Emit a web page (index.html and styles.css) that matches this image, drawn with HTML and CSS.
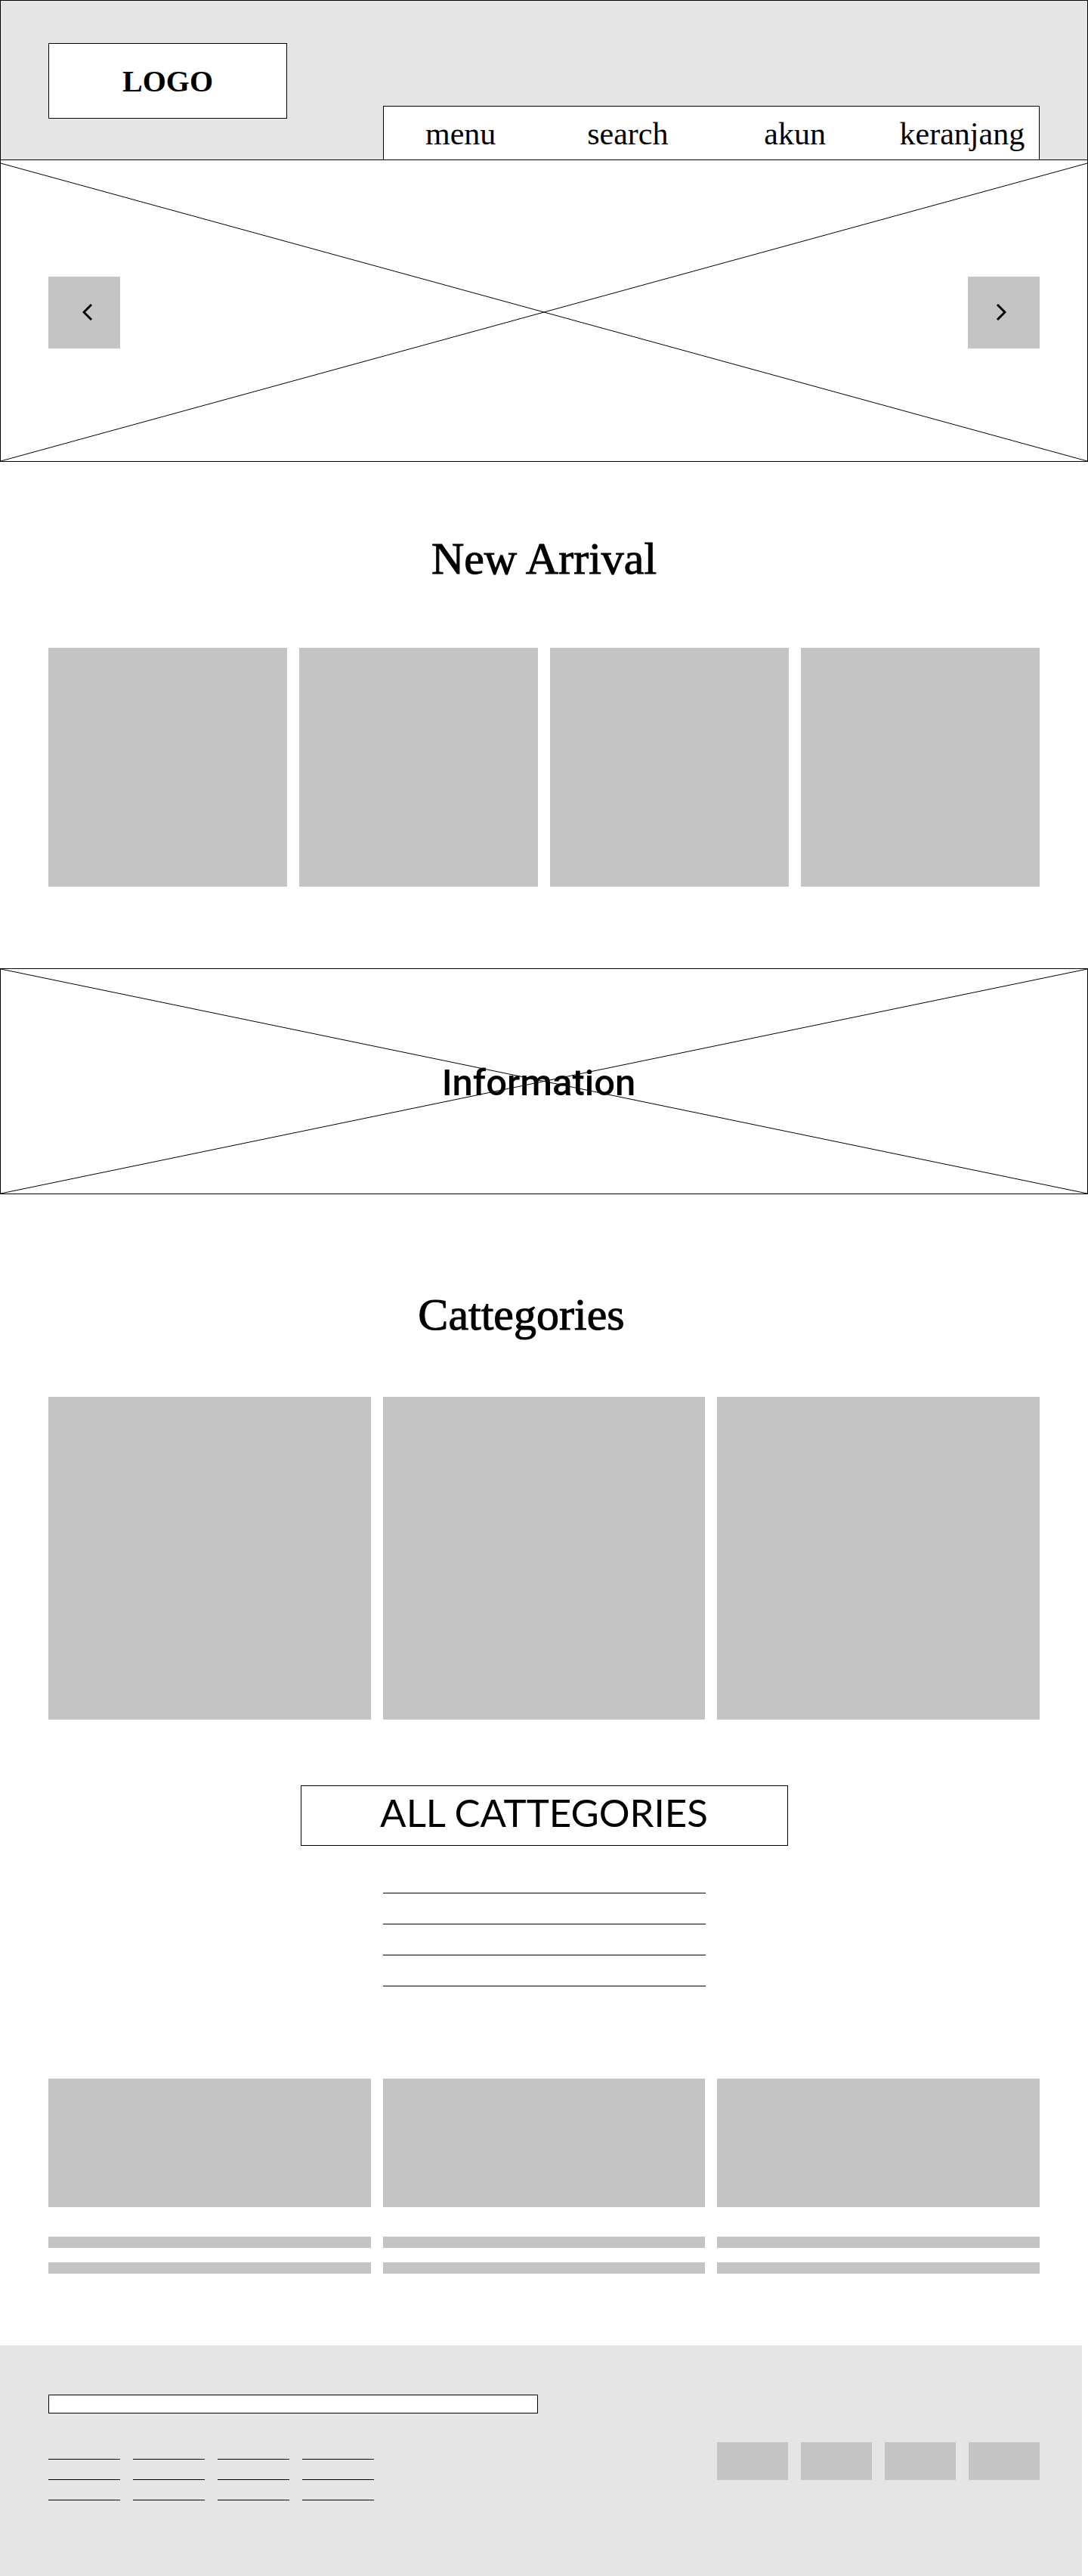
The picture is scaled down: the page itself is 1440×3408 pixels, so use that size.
FILE: index.html
```html
<!DOCTYPE html>
<html lang="id">
<head>
<meta charset="utf-8">
<meta name="viewport" content="width=device-width, initial-scale=1">
<title>LOGO</title>
<link rel="stylesheet" href="styles.css">
</head>
<body>
<header class="header">
  <a class="logo" href="#">LOGO</a>
  <nav class="nav">
    <ul class="nav-list">
      <li><a href="#">menu</a></li>
      <li><a href="#">search</a></li>
      <li><a href="#">akun</a></li>
      <li><a href="#">keranjang</a></li>
    </ul>
  </nav>
</header>

<main>
  <section class="hero" aria-label="Slider">
    <svg class="cross" aria-hidden="true"><line x1="0" y1="4" x2="100%" y2="100%"/><line x1="0" y1="100%" x2="100%" y2="4"/></svg>
    <button class="arrow arrow-prev" type="button" aria-label="Previous">
      <svg width="14" height="24" viewBox="0 0 14 24" aria-hidden="true"><path d="M12 2 2 12l10 10"/></svg>
    </button>
    <button class="arrow arrow-next" type="button" aria-label="Next">
      <svg width="14" height="24" viewBox="0 0 14 24" aria-hidden="true"><path d="m2 2 10 10L2 22"/></svg>
    </button>
  </section>

  <section class="arrivals">
    <h2 class="title">New Arrival</h2>
    <div class="grid grid-four">
      <div class="tile"></div>
      <div class="tile"></div>
      <div class="tile"></div>
      <div class="tile"></div>
    </div>
  </section>

  <section class="banner">
    <svg class="cross" aria-hidden="true"><line x1="0" y1="0" x2="100%" y2="100%"/><line x1="0" y1="100%" x2="100%" y2="0"/></svg>
    <h2 class="banner-title">Information</h2>
  </section>

  <section class="categories">
    <h2 class="title title-shifted">Cattegories</h2>
    <div class="grid grid-three">
      <div class="tile"></div>
      <div class="tile"></div>
      <div class="tile"></div>
    </div>
    <a class="all-link" href="#">ALL CATTEGORIES</a>
    <ul class="category-lines">
      <li></li>
      <li></li>
      <li></li>
      <li></li>
    </ul>
  </section>

  <section class="grid grid-three posts">
    <article class="post"><div class="post-image"></div><div class="bar"></div><div class="bar"></div></article>
    <article class="post"><div class="post-image"></div><div class="bar"></div><div class="bar"></div></article>
    <article class="post"><div class="post-image"></div><div class="bar"></div><div class="bar"></div></article>
  </section>
</main>

<footer class="footer">
  <input class="subscribe" type="text" aria-label="Email">
  <div class="footer-row">
    <div class="footer-links">
      <ul><li></li><li></li><li></li></ul>
      <ul><li></li><li></li><li></li></ul>
      <ul><li></li><li></li><li></li></ul>
      <ul><li></li><li></li><li></li></ul>
    </div>
    <div class="badges">
      <div class="badge"></div>
      <div class="badge"></div>
      <div class="badge"></div>
      <div class="badge"></div>
    </div>
  </div>
</footer>
</body>
</html>
```
FILE: styles.css
```css
*,
*::before,
*::after {
  box-sizing: border-box;
}

body {
  margin: 0;
  background: #fff;
  color: #000;
  font-family: "Liberation Serif", serif;
}

a {
  color: inherit;
  text-decoration: none;
}

ul {
  margin: 0;
  padding: 0;
  list-style: none;
}

.header {
  display: flex;
  justify-content: space-between;
  align-items: flex-start;
  padding: 56px 63px 0;
  background: #e5e5e5;
  border: 1px solid #000;
}

.logo {
  display: flex;
  align-items: center;
  justify-content: center;
  width: 316px;
  height: 100px;
  background: #fff;
  border: 1px solid #000;
  font-size: 40px;
  font-weight: 700;
}

.nav {
  width: 869px;
  margin-top: 83px;
  padding-top: 2px;
  background: #fff;
  border: 1px solid #000;
  border-bottom: 0;
}

.nav-list {
  display: grid;
  grid-template-columns: repeat(4, 1fr);
  margin: 0 -9px;
  font-size: 42px;
  line-height: 68px;
  text-align: center;
}

.hero {
  position: relative;
  display: flex;
  align-items: center;
  justify-content: space-between;
  height: 399px;
  padding: 4px 63px 0;
  border: 1px solid #000;
  border-top: 0;
}

.cross {
  position: absolute;
  inset: 0;
  width: 100%;
  height: 100%;
  stroke: #000;
  stroke-width: 1;
}

.arrow {
  position: relative;
  display: flex;
  align-items: center;
  justify-content: center;
  width: 95px;
  height: 95px;
  padding: 0;
  background: #c4c4c4;
  border: 0;
}

.arrow-prev {
  padding-left: 8px;
}

.arrow-next {
  padding-right: 8px;
}

.arrow path {
  fill: none;
  stroke: #000;
  stroke-width: 3;
}

.title {
  margin: 0;
  font-size: 60px;
  font-weight: 400;
  line-height: 70px;
  text-align: center;
  -webkit-text-stroke: 1px #000;
}

.title-shifted {
  padding-right: 60px;
}

.grid {
  display: grid;
  gap: 16px;
}

.grid-four {
  grid-template-columns: repeat(4, 1fr);
}

.grid-three {
  grid-template-columns: repeat(3, 1fr);
}

.tile {
  aspect-ratio: 1;
  background: #c4c4c4;
}

.arrivals {
  padding: 93px 64px 108px;
}

.arrivals .title {
  margin-bottom: 83px;
}

.banner {
  position: relative;
  display: flex;
  align-items: center;
  justify-content: center;
  height: 299px;
  padding: 4px 14px 0 0;
  border: 1px solid #000;
}

.banner-title {
  position: relative;
  margin: 0;
  font-family: Roboto, sans-serif;
  font-size: 49px;
  font-weight: 500;
}

.categories {
  display: flex;
  flex-direction: column;
  padding: 124px 64px 122px;
}

.categories .title {
  margin-bottom: 74px;
}

.all-link {
  display: flex;
  align-items: center;
  justify-content: center;
  align-self: center;
  width: 645px;
  height: 80px;
  margin-top: 87px;
  padding-bottom: 8px;
  border: 1px solid #000;
  font-family: Lato, sans-serif;
  font-size: 51px;
}

.category-lines {
  display: grid;
  gap: 40px;
  align-self: center;
  width: 427px;
  margin-top: 62px;
}

.category-lines li,
.footer-links li {
  height: 1px;
  background: #000;
}

.posts {
  padding: 0 64px 95px;
}

.post-image {
  height: 170px;
  margin-bottom: 39px;
  background: #c4c4c4;
}

.bar {
  height: 15px;
  background: #c4c4c4;
}

.bar + .bar {
  margin-top: 19px;
}

.footer {
  margin-right: 8px;
  padding: 65px 56px 100px 64px;
  background: #e5e5e5;
}

.subscribe {
  display: block;
  width: 648px;
  height: 25px;
  padding: 0 8px;
  background: #fff;
  border: 1px solid #000;
  border-radius: 0;
  font: inherit;
  font-size: 16px;
}

.footer-row {
  display: flex;
  align-items: flex-start;
  justify-content: space-between;
  margin-top: 38px;
}

.footer-links {
  display: flex;
  gap: 17px;
  padding-top: 22px;
}

.footer-links ul {
  display: grid;
  gap: 26px;
  width: 95px;
}

.badges {
  display: flex;
  gap: 17px;
}

.badge {
  width: 94px;
  height: 50px;
  background: #c4c4c4;
}
```
